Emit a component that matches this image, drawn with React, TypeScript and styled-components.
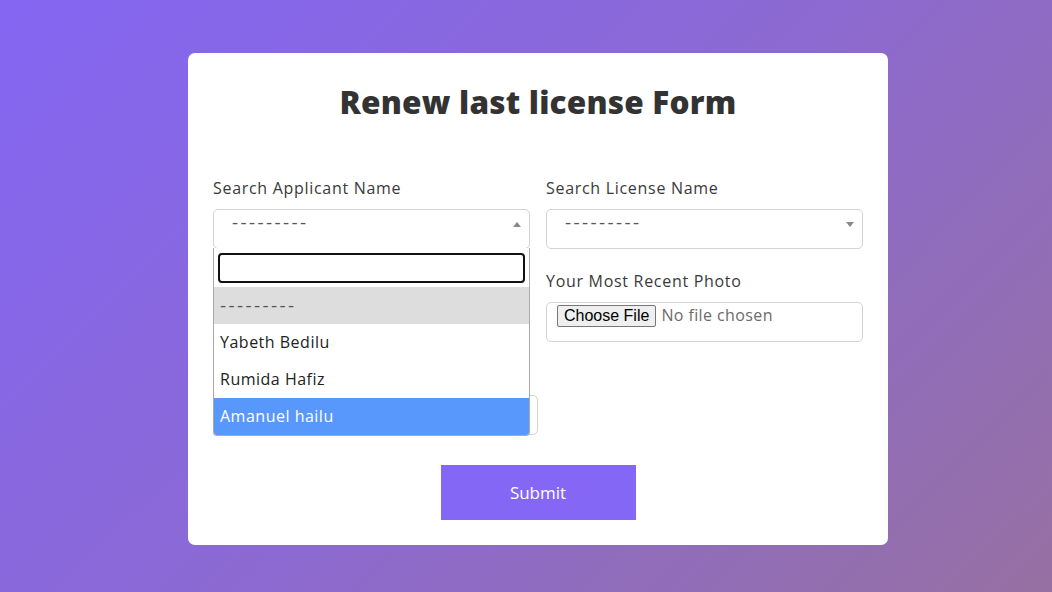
import React from 'react';
import styled, { createGlobalStyle } from 'styled-components';

const GlobalStyle = createGlobalStyle`
  * { box-sizing: border-box; }
  html, body { margin: 0; padding: 0; }
  body {
    font-family: "Open Sans", "Liberation Sans", sans-serif;
    background: linear-gradient(135deg, #8466f3 0%, #8b69d6 45%, #9670a2 100%);
    min-height: 100vh;
  }
`;

const Page = styled.div`
  min-height: 100vh;
  display: flex;
  align-items: center;
  justify-content: center;
  padding: 5px 0 0 24px;
`;

const Card = styled.div`
  width: 700px;
  background: #fff;
  border-radius: 7px;
  padding: 25px;
  display: flex;
  flex-direction: column;
  align-items: center;
`;

const Title = styled.h1`
  margin: 0;
  font-size: 31.5px;
  line-height: 48px;
  font-weight: 800;
  color: #333;
  letter-spacing: 0.2px;
`;

const FormGrid = styled.div`
  margin-top: 50px;
  width: 100%;
  display: grid;
  grid-template-columns: 317px 317px;
  column-gap: 16px;
  align-items: start;
`;

const Column = styled.div`
  display: flex;
  flex-direction: column;
  gap: 20px;
`;

const Field = styled.div`
  display: flex;
  flex-direction: column;
  gap: 9px;
`;

const Label = styled.label<{ $covered?: boolean }>`
  font-size: 16px;
  line-height: 24px;
  letter-spacing: 0.7px;
  color: #3a3a3a;
  visibility: ${(p) => (p.$covered ? 'hidden' : 'visible')};
`;

const SelectWrap = styled.div`
  position: relative;
`;

const SelectBox = styled.div`
  height: 40px;
  border: 1px solid #d3d3d3;
  border-radius: 5px;
  padding: 0 30px 0 18px;
  position: relative;
`;

// the "---------" placeholder, drawn a little larger so the dashes read as in Poppins
const Dashes = styled.span`
  display: block;
  font-size: 19px;
  line-height: 24px;
  letter-spacing: 2.4px;
  color: #555;
`;

const Arrow = styled.span<{ $up?: boolean }>`
  position: absolute;
  right: 8px;
  top: 12px;
  width: 0;
  height: 0;
  border-left: 4px solid transparent;
  border-right: 4px solid transparent;
  ${(p) => (p.$up ? 'border-bottom: 5px solid #888;' : 'border-top: 5px solid #888;')}
`;

const Dropdown = styled.div`
  position: absolute;
  top: 39px;
  left: 0;
  width: 100%;
  background: #fff;
  border: 1px solid #aaa;
  border-top: none;
  border-radius: 0 0 4px 4px;
  z-index: 5;
  overflow: hidden;
`;

const SearchRow = styled.div`
  padding: 5px 4px 4px;
`;

const SearchInput = styled.input`
  display: block;
  width: 100%;
  height: 30px;
  border: 2px solid #111;
  border-radius: 4px;
  outline: none;
  font: inherit;
`;

const Option = styled.div<{ $state?: 'current' | 'hover' }>`
  height: 37px;
  display: flex;
  align-items: center;
  padding: 0 6px;
  font-size: 16px;
  letter-spacing: 0.5px;
  color: ${(p) => (p.$state === 'hover' ? '#fff' : '#222')};
  background: ${(p) => (p.$state === 'hover' ? '#5897fb' : p.$state === 'current' ? '#ddd' : '#fff')};
`;

const TextInput = styled.input<{ $wide?: boolean }>`
  height: 40px;
  width: ${(p) => (p.$wide ? '325px' : '100%')};
  border: 1px solid #d3d3d3;
  border-radius: 5px;
  padding: 0 10px;
  font: inherit;
  font-size: 15px;
`;

const FileInput = styled.input`
  height: 40px;
  width: 100%;
  border: 1px solid #d3d3d3;
  border-radius: 5px;
  padding: 0 10px 2px;
  font-family: "Open Sans", sans-serif;
  font-size: 16px;
  letter-spacing: 0.4px;
  color: #6b6b6b;
  line-height: 24px;

  &::file-selector-button {
    font-family: "Liberation Sans", Arial, sans-serif;
    font-size: 16px;
    letter-spacing: 0;
    color: #000;
    padding: 1px 6px;
    margin-right: 5px;
    border: 1px solid #767676;
    border-radius: 2px;
    background: #efefef;
  }
`;

const SubmitButton = styled.button`
  margin-top: 30px;
  width: 195px;
  height: 55px;
  border: none;
  background: #8468f5;
  color: #fff;
  font-family: inherit;
  font-size: 17px;
  cursor: pointer;
`;

const applicants = ['Yabeth Bedilu', 'Rumida Hafiz', 'Amanuel hailu'];

export default function App() {
  return (
    <>
      <GlobalStyle />
      <Page>
        <Card>
          <Title>Renew last license Form</Title>
          <FormGrid>
            <Column>
              <Field>
                <Label>Search Applicant Name</Label>
                <SelectWrap>
                  <SelectBox>
                    <Dashes>---------</Dashes>
                    <Arrow $up />
                  </SelectBox>
                  <Dropdown>
                    <SearchRow>
                      <SearchInput type="text" />
                    </SearchRow>
                    <Option $state="current">
                      <Dashes>---------</Dashes>
                    </Option>
                    {applicants.map((name, i) => (
                      <Option key={name} $state={i === applicants.length - 1 ? 'hover' : undefined}>
                        {name}
                      </Option>
                    ))}
                  </Dropdown>
                </SelectWrap>
              </Field>
              <Field>
                <Label $covered>Phone Number</Label>
                <TextInput type="text" />
              </Field>
              <Field>
                <Label $covered>Previous License Date</Label>
                <TextInput type="text" $wide />
              </Field>
            </Column>
            <Column>
              <Field>
                <Label>Search License Name</Label>
                <SelectBox>
                  <Dashes>---------</Dashes>
                  <Arrow />
                </SelectBox>
              </Field>
              <Field>
                <Label>Your Most Recent Photo</Label>
                <FileInput type="file" />
              </Field>
            </Column>
          </FormGrid>
          <SubmitButton>Submit</SubmitButton>
        </Card>
      </Page>
    </>
  );
}
